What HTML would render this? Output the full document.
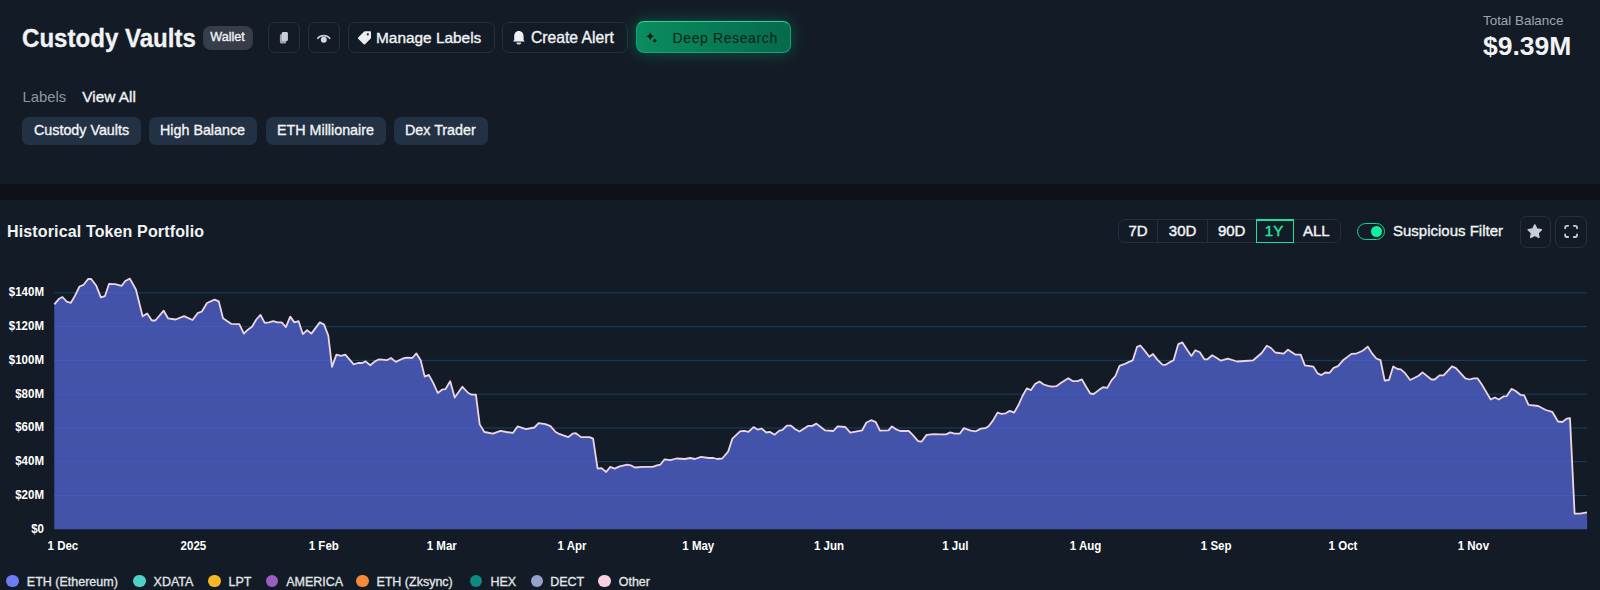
<!DOCTYPE html>
<html><head><meta charset="utf-8">
<style>
*{box-sizing:border-box;margin:0;padding:0}
html,body{width:1600px;height:590px;overflow:hidden;background:#131c26;font-family:"Liberation Sans",sans-serif;color:#f1f3f5}
.a{position:absolute}
.btn{position:absolute;top:22px;height:31px;border:1px solid #262f3b;border-radius:7px}
.t{position:absolute;white-space:nowrap;line-height:1}
.m{-webkit-text-stroke:0.35px currentColor}
.chip{position:absolute;top:116.5px;height:28.4px;background:#233144;border-radius:7px}
.lg{-webkit-text-stroke:0.3px currentColor;position:absolute;top:575.5px;font-size:12.5px;line-height:1;white-space:nowrap;color:#e3e6ea}
.dot{position:absolute;top:575px;width:12.4px;height:12.4px;border-radius:50%}
.rt{-webkit-text-stroke:0.45px currentColor;position:absolute;top:223px;font-size:15px;line-height:1;white-space:nowrap;text-align:center;width:40px;margin-left:-20px}
</style></head><body>
<!-- header -->
<div class="t" style="left:21.6px;top:24.6px;font-size:26px;font-weight:bold;transform:scaleX(0.926);transform-origin:0 0;-webkit-text-stroke:0.3px currentColor">Custody Vaults</div>
<div class="a" style="left:203px;top:26px;width:50px;height:24px;background:#373e49;border-radius:8px"></div>
<div class="t m" style="left:210.3px;top:31.3px;font-size:12.6px">Wallet</div>

<div class="btn" style="left:268px;width:32px"></div>
<div class="btn" style="left:308px;width:32px"></div>
<div class="btn" style="left:348px;width:147px"></div>
<div class="t m" style="left:376px;top:30px;font-size:15.4px">Manage Labels</div>
<div class="btn" style="left:502px;width:126px"></div>
<div class="t m" style="left:531px;top:30px;font-size:15.7px">Create Alert</div>
<div class="a" style="left:635.5px;top:21.3px;width:155.5px;height:32px;border-radius:8px;background:linear-gradient(90deg,#0a8d60,#066a4b);border:1px solid #12a577;border-top-color:#25d99c;box-shadow:0 0 14px 2px rgba(16,160,115,.33)"></div>
<div class="t" style="left:672.5px;top:30.5px;font-size:14px;letter-spacing:0.62px;color:#06211a">Deep Research</div>

<svg class="a" style="left:0;top:0" width="800" height="60">
 <!-- copy -->
 <rect x="279.9" y="33.9" width="6.3" height="9.7" rx="1.6" fill="#9ea4ae"/>
 <rect x="281.8" y="31.9" width="6.1" height="9.2" rx="1.4" fill="#c9cdd5"/>
 <!-- eye -->
 <path d="M317.8,38.3 A7.2,6.2 0 0 1 329.7,38.3" fill="none" stroke="#c9cdd5" stroke-width="1.7" stroke-linecap="round"/>
 <circle cx="323.8" cy="39.7" r="3" fill="#d4d8de"/>
 <!-- tag -->
 <g transform="translate(364.6,37.7) scale(1.07) translate(-364.6,-37.7)"><path d="M365,31.6 L370,31.6 Q370.6,31.6 370.6,32.2 L370.6,37.6 Q370.6,38.2 370.1,38.7 L365,43.8 Q364.4,44.4 363.8,43.8 L358.6,38.6 Q358,38 358.6,37.4 L364.2,31.9 Q364.5,31.6 365,31.6 Z" fill="#eceef1"/>
 <circle cx="367.6" cy="34.6" r="1" fill="#131c26"/></g>
 <!-- bell -->
 <path d="M518.8,31 C515.6,31 514.2,33.4 514.2,36.5 L514.2,40 L513,41.6 L524.8,41.6 L523.6,40 L523.6,36.5 C523.6,33.4 522.1,31 518.8,31 Z" fill="#eef0f3"/>
 <path d="M516.4,42.4 L521.2,42.4 C521.2,43.8 520.2,44.6 518.8,44.6 C517.4,44.6 516.4,43.8 516.4,42.4 Z" fill="#d6d9de"/>
 <!-- sparkle -->
 <path d="M650.2,32.2 Q650.9,35.5 654.2,36.2 Q650.9,36.9 650.2,40.2 Q649.5,36.9 646.2,36.2 Q649.5,35.5 650.2,32.2 Z" fill="#06140f"/>
 <path d="M654.8,38.7 L656.8,40.7 L654.8,42.7 L652.8,40.7 Z" fill="#06140f"/>
</svg>

<div class="t" style="left:1483px;top:14px;font-size:13.4px;color:#9ea6b0">Total Balance</div>
<div class="t" style="left:1483px;top:33px;font-size:26.5px;font-weight:bold">$9.39M</div>

<!-- labels -->
<div class="t" style="left:22.5px;top:89.8px;font-size:14.8px;color:#8f96a0">Labels</div>
<div class="t m" style="left:82.3px;top:89.2px;font-size:15.4px">View All</div>
<div class="chip" style="left:22px;width:119px"></div>
<div class="t m" style="left:34px;top:123px;font-size:14.3px">Custody Vaults</div>
<div class="chip" style="left:149px;width:108px"></div>
<div class="t m" style="left:160px;top:123px;font-size:14.3px">High Balance</div>
<div class="chip" style="left:266px;width:120px"></div>
<div class="t m" style="left:277px;top:123px;font-size:14.3px">ETH Millionaire</div>
<div class="chip" style="left:394px;width:94px"></div>
<div class="t m" style="left:405px;top:123px;font-size:14.3px">Dex Trader</div>

<!-- band -->
<div class="a" style="left:0;top:184px;width:1600px;height:16px;background:#0d1219"></div>

<!-- chart header -->
<div class="t" style="left:7px;top:224px;font-size:16px;font-weight:bold;letter-spacing:0.14px">Historical Token Portfolio</div>
<div class="a" style="left:1118px;top:219px;width:223px;height:24px;border:1px solid #262f3b;border-radius:7px"></div>
<div class="a" style="left:1157px;top:220px;width:1px;height:22px;background:#262f3b"></div>
<div class="a" style="left:1207px;top:220px;width:1px;height:22px;background:#262f3b"></div>
<div class="a" style="left:1256px;top:219px;width:38px;height:24px;border:1.5px solid #17e39b;border-top-width:2px"></div>
<div class="rt" style="left:1138px">7D</div>
<div class="rt" style="left:1182.6px">30D</div>
<div class="rt" style="left:1231.7px">90D</div>
<div class="rt" style="left:1274px;color:#1de69a">1Y</div>
<div class="rt" style="left:1316.3px">ALL</div>

<div class="a" style="left:1356.8px;top:222.8px;width:28.2px;height:17.3px;border:1.7px solid #15d392;border-radius:9px"></div>
<div class="a" style="left:1370.7px;top:225.8px;width:11.4px;height:11.4px;border-radius:50%;background:#0af2a2"></div>
<div class="t m" style="left:1393px;top:223px;font-size:15px">Suspicious Filter</div>

<div class="a" style="left:1519.5px;top:216px;width:31.5px;height:31.5px;border:1px solid #262f3b;border-radius:7px"></div>
<div class="a" style="left:1555px;top:216px;width:31.5px;height:31.5px;border:1px solid #262f3b;border-radius:7px"></div>
<svg class="a" style="left:1500px;top:210px" width="100" height="40">
 <path d="M34.80,14.80 L36.86,18.97 L41.46,19.64 L38.13,22.88 L38.91,27.46 L34.80,25.30 L30.69,27.46 L31.47,22.88 L28.14,19.64 L32.74,18.97 Z" fill="#c9cdd5" stroke="#c9cdd5" stroke-width="1.4" stroke-linejoin="round"/>
 <g fill="none" stroke="#c9cdd5" stroke-width="1.8" stroke-linecap="round">
  <path d="M65.2,18.3 L65.2,17.5 Q65.2,15.8 66.9,15.8 L68.2,15.8"/>
  <path d="M73.8,15.8 L75.3,15.8 Q77,15.8 77,17.5 L77,18.3"/>
  <path d="M65.2,24.5 L65.2,25.3 Q65.2,27 66.9,27 L68.2,27"/>
  <path d="M73.8,27 L75.3,27 Q77,27 77,25.3 L77,24.5"/>
 </g>
</svg>

<svg class="a" style="left:0;top:0" width="1600" height="590">
<defs><clipPath id="ac"><path d="M54.3,304.4 L59.2,298.7 L62.4,297 L66.8,301.7 L70.9,302.8 L74.9,295.9 L79.5,286.5 L83.6,284.8 L88.1,279 L91.2,279 L96.3,285.8 L100.9,297.3 L104.9,296.2 L109,284 L115.1,284.2 L121.7,285.8 L125.3,281 L129.9,278.6 L136,289.8 L142.6,316.3 L147.2,313.5 L151.9,320.5 L155.3,320.5 L163.7,310.7 L168,318.3 L175.6,319.5 L184.1,316.1 L192.5,320 L197.6,313.2 L201.9,311.5 L207,303 L214.6,299.7 L218.8,301.4 L223,318.3 L231.5,323.9 L239.3,324.1 L243.9,333.6 L247.8,329.7 L252,326.8 L256.3,319.5 L260.5,314.9 L264.7,322.9 L269,322.4 L273.2,321.2 L277.5,322.4 L281.7,322.4 L285.9,327.1 L290.2,316.6 L294.4,322.4 L298.6,321.2 L302.9,334.2 L307.1,330.2 L311.4,333.6 L319.8,322.4 L324.1,324.6 L328.3,335.6 L332,366.9 L336.4,354.6 L341,355.9 L345.3,354.6 L353.7,364.4 L358,363 L362.2,363 L365.6,361.4 L370.3,365.3 L374.9,361.4 L379.2,359.3 L386.8,360.2 L391,358 L395.8,361.9 L402.9,358.5 L407.1,357.6 L412.2,358 L416.4,353.4 L420.7,360.2 L424.7,376.6 L428.8,374.9 L433.2,382.9 L437.8,393 L442,389.7 L445.4,389.2 L450.2,381.2 L454.7,397.6 L462.4,386.8 L468.3,393 L471.7,394.7 L475.9,394.7 L479.7,424.4 L484.4,432 L492.9,433.7 L500.5,430.8 L506.4,432 L512.9,432.9 L517.5,426.4 L525.9,429.2 L534.4,427.5 L538.6,423.2 L545.4,424.1 L550.5,426.1 L555.6,432 L559.8,434.2 L568.3,437.1 L572.5,433.7 L575.9,433.2 L581,437.1 L589.5,437.1 L593.1,438.6 L597.6,468.6 L601.5,468.1 L606.1,472 L610.3,466.9 L614.6,468.6 L619.7,466.4 L627.3,464.7 L630.7,465.3 L634.9,467.5 L642.5,466.9 L652.7,466.9 L657,465.3 L660.3,464.7 L664.6,459.3 L670.5,460.2 L676.4,458.5 L684.9,459 L690,458 L695.1,459 L701,456.8 L708.6,458 L713.7,458 L717.1,459 L722.2,458.5 L728.1,451.7 L732.4,438.6 L740,431.4 L744.2,430.8 L748.5,431.9 L753.6,427.1 L757.8,429.7 L761.5,428.5 L766.3,432.5 L769.7,431.9 L774.7,434.7 L779,430.8 L782.5,429.8 L786.8,425.6 L791,425.6 L795.3,429.3 L799.5,431.5 L808,425.9 L812.2,425.9 L816.4,423.6 L824.9,430.3 L833.4,431 L837.6,426.4 L845.3,427 L850.3,432.7 L862.2,430.3 L866.4,422.5 L871.2,420.2 L875.8,422.2 L880,430.7 L888.5,430.3 L891.9,426.4 L896.1,429.3 L900.3,431 L908.8,431 L912.2,434.4 L918.1,441.2 L921.5,441.7 L926.6,434.9 L934.2,434.1 L939.3,434.4 L946.1,434.4 L950.3,432.4 L954.6,433.7 L959.7,433.7 L963.9,428.1 L970.7,430.7 L975.9,431.3 L981,428.6 L985.3,428.2 L988.6,426.2 L992.9,420.6 L997.5,412.6 L1001.4,413.8 L1005.6,413.3 L1009.8,410.9 L1014.1,412.6 L1018.3,405.3 L1022.5,396 L1026.8,388.4 L1031,390.1 L1035.3,383.8 L1039.5,381.6 L1043.7,384.5 L1048,385.8 L1052.2,386.7 L1056.4,386.2 L1061.5,382.5 L1068.3,378.2 L1072.5,381.1 L1077.6,381.1 L1081.9,379.4 L1086.1,386.7 L1090.3,393.5 L1093.7,394 L1098.8,390.1 L1103,387.2 L1107.3,387.9 L1111.5,380.4 L1115.4,376 L1119.5,365.8 L1124.2,364.2 L1128.5,362.1 L1132.7,360.4 L1137,346.9 L1140.3,345.5 L1144.6,350.6 L1149.3,356.7 L1153,354 L1157.3,359.6 L1162.4,364.7 L1165.1,364.9 L1169.3,362.4 L1173.6,360.3 L1178.3,344.1 L1182.4,342.4 L1187.1,349.7 L1191.4,355.9 L1195.3,350.2 L1199.8,352.2 L1204.4,359.3 L1207.5,359.3 L1212.2,355.3 L1216.8,358.1 L1221,360.7 L1227.8,358.6 L1237.1,361.5 L1244.7,361 L1253.2,360.3 L1261.7,353 L1266.8,345.8 L1271,348 L1275.3,352.5 L1283.7,353.6 L1288,349.7 L1292.2,352.5 L1295.6,354.7 L1300.7,354.7 L1304.9,365.4 L1313.4,366.6 L1317.6,373.4 L1321.4,375.1 L1325.3,372.5 L1329.5,372.9 L1333.7,367.8 L1338,366.1 L1343,360.3 L1351.5,353.9 L1355.9,353.7 L1362.7,350.7 L1367.8,346.6 L1372,353.4 L1376.3,358.5 L1380.5,360.2 L1384.7,380.5 L1389,380 L1393.2,366.4 L1397.5,369 L1400.8,369.3 L1405.1,373.2 L1410.2,380 L1418.6,375.8 L1422.5,372.4 L1431.4,379.5 L1434.7,379.5 L1439.5,375.4 L1443.6,375.4 L1452,366.4 L1455.9,368.1 L1465.3,378.3 L1469.5,379.5 L1473.7,378.3 L1477.5,378.3 L1482.2,385.1 L1490.7,399.5 L1494.9,397.5 L1498.8,399.5 L1503.4,396.4 L1506.8,396.1 L1511.5,388.9 L1515.3,390.7 L1520.4,394.8 L1524.2,395.3 L1528.5,404.9 L1538.2,406 L1545.8,410 L1552.2,411.8 L1558,421.5 L1562.3,422 L1566.7,418.7 L1570,418.2 L1574.6,513.6 L1580.2,513.6 L1587,512.3 L1587.2,529.3 L54.3,529.3 Z"/></clipPath></defs>
<g stroke="#17405f" stroke-width="1" fill="none"><line x1="54.3" x2="1587.2" y1="495.5" y2="495.5"/><line x1="54.3" x2="1587.2" y1="461.7" y2="461.7"/><line x1="54.3" x2="1587.2" y1="428" y2="428"/><line x1="54.3" x2="1587.2" y1="394.2" y2="394.2"/><line x1="54.3" x2="1587.2" y1="360.4" y2="360.4"/><line x1="54.3" x2="1587.2" y1="326.6" y2="326.6"/><line x1="54.3" x2="1587.2" y1="292.8" y2="292.8"/></g>
<path d="M54.3,304.4 L59.2,298.7 L62.4,297 L66.8,301.7 L70.9,302.8 L74.9,295.9 L79.5,286.5 L83.6,284.8 L88.1,279 L91.2,279 L96.3,285.8 L100.9,297.3 L104.9,296.2 L109,284 L115.1,284.2 L121.7,285.8 L125.3,281 L129.9,278.6 L136,289.8 L142.6,316.3 L147.2,313.5 L151.9,320.5 L155.3,320.5 L163.7,310.7 L168,318.3 L175.6,319.5 L184.1,316.1 L192.5,320 L197.6,313.2 L201.9,311.5 L207,303 L214.6,299.7 L218.8,301.4 L223,318.3 L231.5,323.9 L239.3,324.1 L243.9,333.6 L247.8,329.7 L252,326.8 L256.3,319.5 L260.5,314.9 L264.7,322.9 L269,322.4 L273.2,321.2 L277.5,322.4 L281.7,322.4 L285.9,327.1 L290.2,316.6 L294.4,322.4 L298.6,321.2 L302.9,334.2 L307.1,330.2 L311.4,333.6 L319.8,322.4 L324.1,324.6 L328.3,335.6 L332,366.9 L336.4,354.6 L341,355.9 L345.3,354.6 L353.7,364.4 L358,363 L362.2,363 L365.6,361.4 L370.3,365.3 L374.9,361.4 L379.2,359.3 L386.8,360.2 L391,358 L395.8,361.9 L402.9,358.5 L407.1,357.6 L412.2,358 L416.4,353.4 L420.7,360.2 L424.7,376.6 L428.8,374.9 L433.2,382.9 L437.8,393 L442,389.7 L445.4,389.2 L450.2,381.2 L454.7,397.6 L462.4,386.8 L468.3,393 L471.7,394.7 L475.9,394.7 L479.7,424.4 L484.4,432 L492.9,433.7 L500.5,430.8 L506.4,432 L512.9,432.9 L517.5,426.4 L525.9,429.2 L534.4,427.5 L538.6,423.2 L545.4,424.1 L550.5,426.1 L555.6,432 L559.8,434.2 L568.3,437.1 L572.5,433.7 L575.9,433.2 L581,437.1 L589.5,437.1 L593.1,438.6 L597.6,468.6 L601.5,468.1 L606.1,472 L610.3,466.9 L614.6,468.6 L619.7,466.4 L627.3,464.7 L630.7,465.3 L634.9,467.5 L642.5,466.9 L652.7,466.9 L657,465.3 L660.3,464.7 L664.6,459.3 L670.5,460.2 L676.4,458.5 L684.9,459 L690,458 L695.1,459 L701,456.8 L708.6,458 L713.7,458 L717.1,459 L722.2,458.5 L728.1,451.7 L732.4,438.6 L740,431.4 L744.2,430.8 L748.5,431.9 L753.6,427.1 L757.8,429.7 L761.5,428.5 L766.3,432.5 L769.7,431.9 L774.7,434.7 L779,430.8 L782.5,429.8 L786.8,425.6 L791,425.6 L795.3,429.3 L799.5,431.5 L808,425.9 L812.2,425.9 L816.4,423.6 L824.9,430.3 L833.4,431 L837.6,426.4 L845.3,427 L850.3,432.7 L862.2,430.3 L866.4,422.5 L871.2,420.2 L875.8,422.2 L880,430.7 L888.5,430.3 L891.9,426.4 L896.1,429.3 L900.3,431 L908.8,431 L912.2,434.4 L918.1,441.2 L921.5,441.7 L926.6,434.9 L934.2,434.1 L939.3,434.4 L946.1,434.4 L950.3,432.4 L954.6,433.7 L959.7,433.7 L963.9,428.1 L970.7,430.7 L975.9,431.3 L981,428.6 L985.3,428.2 L988.6,426.2 L992.9,420.6 L997.5,412.6 L1001.4,413.8 L1005.6,413.3 L1009.8,410.9 L1014.1,412.6 L1018.3,405.3 L1022.5,396 L1026.8,388.4 L1031,390.1 L1035.3,383.8 L1039.5,381.6 L1043.7,384.5 L1048,385.8 L1052.2,386.7 L1056.4,386.2 L1061.5,382.5 L1068.3,378.2 L1072.5,381.1 L1077.6,381.1 L1081.9,379.4 L1086.1,386.7 L1090.3,393.5 L1093.7,394 L1098.8,390.1 L1103,387.2 L1107.3,387.9 L1111.5,380.4 L1115.4,376 L1119.5,365.8 L1124.2,364.2 L1128.5,362.1 L1132.7,360.4 L1137,346.9 L1140.3,345.5 L1144.6,350.6 L1149.3,356.7 L1153,354 L1157.3,359.6 L1162.4,364.7 L1165.1,364.9 L1169.3,362.4 L1173.6,360.3 L1178.3,344.1 L1182.4,342.4 L1187.1,349.7 L1191.4,355.9 L1195.3,350.2 L1199.8,352.2 L1204.4,359.3 L1207.5,359.3 L1212.2,355.3 L1216.8,358.1 L1221,360.7 L1227.8,358.6 L1237.1,361.5 L1244.7,361 L1253.2,360.3 L1261.7,353 L1266.8,345.8 L1271,348 L1275.3,352.5 L1283.7,353.6 L1288,349.7 L1292.2,352.5 L1295.6,354.7 L1300.7,354.7 L1304.9,365.4 L1313.4,366.6 L1317.6,373.4 L1321.4,375.1 L1325.3,372.5 L1329.5,372.9 L1333.7,367.8 L1338,366.1 L1343,360.3 L1351.5,353.9 L1355.9,353.7 L1362.7,350.7 L1367.8,346.6 L1372,353.4 L1376.3,358.5 L1380.5,360.2 L1384.7,380.5 L1389,380 L1393.2,366.4 L1397.5,369 L1400.8,369.3 L1405.1,373.2 L1410.2,380 L1418.6,375.8 L1422.5,372.4 L1431.4,379.5 L1434.7,379.5 L1439.5,375.4 L1443.6,375.4 L1452,366.4 L1455.9,368.1 L1465.3,378.3 L1469.5,379.5 L1473.7,378.3 L1477.5,378.3 L1482.2,385.1 L1490.7,399.5 L1494.9,397.5 L1498.8,399.5 L1503.4,396.4 L1506.8,396.1 L1511.5,388.9 L1515.3,390.7 L1520.4,394.8 L1524.2,395.3 L1528.5,404.9 L1538.2,406 L1545.8,410 L1552.2,411.8 L1558,421.5 L1562.3,422 L1566.7,418.7 L1570,418.2 L1574.6,513.6 L1580.2,513.6 L1587,512.3 L1587.2,529.3 L54.3,529.3 Z" fill="#4253a9"/>
<g stroke="#435cbc" stroke-width="1" fill="none" clip-path="url(#ac)"><line x1="54.3" x2="1587.2" y1="495.5" y2="495.5"/><line x1="54.3" x2="1587.2" y1="461.7" y2="461.7"/><line x1="54.3" x2="1587.2" y1="428" y2="428"/><line x1="54.3" x2="1587.2" y1="394.2" y2="394.2"/><line x1="54.3" x2="1587.2" y1="360.4" y2="360.4"/><line x1="54.3" x2="1587.2" y1="326.6" y2="326.6"/><line x1="54.3" x2="1587.2" y1="292.8" y2="292.8"/></g>
<path d="M54.3,304.4 L59.2,298.7 L62.4,297 L66.8,301.7 L70.9,302.8 L74.9,295.9 L79.5,286.5 L83.6,284.8 L88.1,279 L91.2,279 L96.3,285.8 L100.9,297.3 L104.9,296.2 L109,284 L115.1,284.2 L121.7,285.8 L125.3,281 L129.9,278.6 L136,289.8 L142.6,316.3 L147.2,313.5 L151.9,320.5 L155.3,320.5 L163.7,310.7 L168,318.3 L175.6,319.5 L184.1,316.1 L192.5,320 L197.6,313.2 L201.9,311.5 L207,303 L214.6,299.7 L218.8,301.4 L223,318.3 L231.5,323.9 L239.3,324.1 L243.9,333.6 L247.8,329.7 L252,326.8 L256.3,319.5 L260.5,314.9 L264.7,322.9 L269,322.4 L273.2,321.2 L277.5,322.4 L281.7,322.4 L285.9,327.1 L290.2,316.6 L294.4,322.4 L298.6,321.2 L302.9,334.2 L307.1,330.2 L311.4,333.6 L319.8,322.4 L324.1,324.6 L328.3,335.6 L332,366.9 L336.4,354.6 L341,355.9 L345.3,354.6 L353.7,364.4 L358,363 L362.2,363 L365.6,361.4 L370.3,365.3 L374.9,361.4 L379.2,359.3 L386.8,360.2 L391,358 L395.8,361.9 L402.9,358.5 L407.1,357.6 L412.2,358 L416.4,353.4 L420.7,360.2 L424.7,376.6 L428.8,374.9 L433.2,382.9 L437.8,393 L442,389.7 L445.4,389.2 L450.2,381.2 L454.7,397.6 L462.4,386.8 L468.3,393 L471.7,394.7 L475.9,394.7 L479.7,424.4 L484.4,432 L492.9,433.7 L500.5,430.8 L506.4,432 L512.9,432.9 L517.5,426.4 L525.9,429.2 L534.4,427.5 L538.6,423.2 L545.4,424.1 L550.5,426.1 L555.6,432 L559.8,434.2 L568.3,437.1 L572.5,433.7 L575.9,433.2 L581,437.1 L589.5,437.1 L593.1,438.6 L597.6,468.6 L601.5,468.1 L606.1,472 L610.3,466.9 L614.6,468.6 L619.7,466.4 L627.3,464.7 L630.7,465.3 L634.9,467.5 L642.5,466.9 L652.7,466.9 L657,465.3 L660.3,464.7 L664.6,459.3 L670.5,460.2 L676.4,458.5 L684.9,459 L690,458 L695.1,459 L701,456.8 L708.6,458 L713.7,458 L717.1,459 L722.2,458.5 L728.1,451.7 L732.4,438.6 L740,431.4 L744.2,430.8 L748.5,431.9 L753.6,427.1 L757.8,429.7 L761.5,428.5 L766.3,432.5 L769.7,431.9 L774.7,434.7 L779,430.8 L782.5,429.8 L786.8,425.6 L791,425.6 L795.3,429.3 L799.5,431.5 L808,425.9 L812.2,425.9 L816.4,423.6 L824.9,430.3 L833.4,431 L837.6,426.4 L845.3,427 L850.3,432.7 L862.2,430.3 L866.4,422.5 L871.2,420.2 L875.8,422.2 L880,430.7 L888.5,430.3 L891.9,426.4 L896.1,429.3 L900.3,431 L908.8,431 L912.2,434.4 L918.1,441.2 L921.5,441.7 L926.6,434.9 L934.2,434.1 L939.3,434.4 L946.1,434.4 L950.3,432.4 L954.6,433.7 L959.7,433.7 L963.9,428.1 L970.7,430.7 L975.9,431.3 L981,428.6 L985.3,428.2 L988.6,426.2 L992.9,420.6 L997.5,412.6 L1001.4,413.8 L1005.6,413.3 L1009.8,410.9 L1014.1,412.6 L1018.3,405.3 L1022.5,396 L1026.8,388.4 L1031,390.1 L1035.3,383.8 L1039.5,381.6 L1043.7,384.5 L1048,385.8 L1052.2,386.7 L1056.4,386.2 L1061.5,382.5 L1068.3,378.2 L1072.5,381.1 L1077.6,381.1 L1081.9,379.4 L1086.1,386.7 L1090.3,393.5 L1093.7,394 L1098.8,390.1 L1103,387.2 L1107.3,387.9 L1111.5,380.4 L1115.4,376 L1119.5,365.8 L1124.2,364.2 L1128.5,362.1 L1132.7,360.4 L1137,346.9 L1140.3,345.5 L1144.6,350.6 L1149.3,356.7 L1153,354 L1157.3,359.6 L1162.4,364.7 L1165.1,364.9 L1169.3,362.4 L1173.6,360.3 L1178.3,344.1 L1182.4,342.4 L1187.1,349.7 L1191.4,355.9 L1195.3,350.2 L1199.8,352.2 L1204.4,359.3 L1207.5,359.3 L1212.2,355.3 L1216.8,358.1 L1221,360.7 L1227.8,358.6 L1237.1,361.5 L1244.7,361 L1253.2,360.3 L1261.7,353 L1266.8,345.8 L1271,348 L1275.3,352.5 L1283.7,353.6 L1288,349.7 L1292.2,352.5 L1295.6,354.7 L1300.7,354.7 L1304.9,365.4 L1313.4,366.6 L1317.6,373.4 L1321.4,375.1 L1325.3,372.5 L1329.5,372.9 L1333.7,367.8 L1338,366.1 L1343,360.3 L1351.5,353.9 L1355.9,353.7 L1362.7,350.7 L1367.8,346.6 L1372,353.4 L1376.3,358.5 L1380.5,360.2 L1384.7,380.5 L1389,380 L1393.2,366.4 L1397.5,369 L1400.8,369.3 L1405.1,373.2 L1410.2,380 L1418.6,375.8 L1422.5,372.4 L1431.4,379.5 L1434.7,379.5 L1439.5,375.4 L1443.6,375.4 L1452,366.4 L1455.9,368.1 L1465.3,378.3 L1469.5,379.5 L1473.7,378.3 L1477.5,378.3 L1482.2,385.1 L1490.7,399.5 L1494.9,397.5 L1498.8,399.5 L1503.4,396.4 L1506.8,396.1 L1511.5,388.9 L1515.3,390.7 L1520.4,394.8 L1524.2,395.3 L1528.5,404.9 L1538.2,406 L1545.8,410 L1552.2,411.8 L1558,421.5 L1562.3,422 L1566.7,418.7 L1570,418.2 L1574.6,513.6 L1580.2,513.6 L1587,512.3" fill="none" stroke="#edd5e1" stroke-width="1.8" stroke-linejoin="round"/>
<g font-family="Liberation Sans" font-weight="bold" font-size="12" fill="#fff" text-anchor="end" transform="translate(44,0) scale(0.96,1) translate(-44,0)"><text x="44" y="532.7">$0</text><text x="44" y="498.9">$20M</text><text x="44" y="465.1">$40M</text><text x="44" y="431.4">$60M</text><text x="44" y="397.6">$80M</text><text x="44" y="363.8">$100M</text><text x="44" y="330">$120M</text><text x="44" y="296.2">$140M</text></g>
<g font-family="Liberation Sans" font-weight="bold" font-size="12" fill="#fff" text-anchor="middle"><text x="62.9" y="550.1" transform="translate(62.9,0) scale(0.96,1) translate(-62.9,0)">1 Dec</text><text x="193.4" y="550.1" transform="translate(193.4,0) scale(0.96,1) translate(-193.4,0)">2025</text><text x="323.8" y="550.1" transform="translate(323.8,0) scale(0.96,1) translate(-323.8,0)">1 Feb</text><text x="441.8" y="550.1" transform="translate(441.8,0) scale(0.96,1) translate(-441.8,0)">1 Mar</text><text x="572" y="550.1" transform="translate(572,0) scale(0.96,1) translate(-572,0)">1 Apr</text><text x="698.3" y="550.1" transform="translate(698.3,0) scale(0.96,1) translate(-698.3,0)">1 May</text><text x="829" y="550.1" transform="translate(829,0) scale(0.96,1) translate(-829,0)">1 Jun</text><text x="955.3" y="550.1" transform="translate(955.3,0) scale(0.96,1) translate(-955.3,0)">1 Jul</text><text x="1085.6" y="550.1" transform="translate(1085.6,0) scale(0.96,1) translate(-1085.6,0)">1 Aug</text><text x="1216.2" y="550.1" transform="translate(1216.2,0) scale(0.96,1) translate(-1216.2,0)">1 Sep</text><text x="1343" y="550.1" transform="translate(1343,0) scale(0.96,1) translate(-1343,0)">1 Oct</text><text x="1473.4" y="550.1" transform="translate(1473.4,0) scale(0.96,1) translate(-1473.4,0)">1 Nov</text></g>
</svg>
<div class="dot" style="left:6.4px;background:#6b7cf5"></div><div class="lg" style="left:26.8px">ETH (Ethereum)</div><div class="dot" style="left:133.3px;background:#4fd1c5"></div><div class="lg" style="left:153.6px">XDATA</div><div class="dot" style="left:208.3px;background:#f6b827"></div><div class="lg" style="left:228.5px">LPT</div><div class="dot" style="left:266px;background:#9b5fc0"></div><div class="lg" style="left:286.2px">AMERICA</div><div class="dot" style="left:356.4px;background:#f58b3a"></div><div class="lg" style="left:376.4px">ETH (Zksync)</div><div class="dot" style="left:470px;background:#0f8a80"></div><div class="lg" style="left:490.4px">HEX</div><div class="dot" style="left:530.8px;background:#94a3cc"></div><div class="lg" style="left:550.2px">DECT</div><div class="dot" style="left:598.2px;background:#fbcfe0"></div><div class="lg" style="left:618.7px">Other</div>
</body></html>
